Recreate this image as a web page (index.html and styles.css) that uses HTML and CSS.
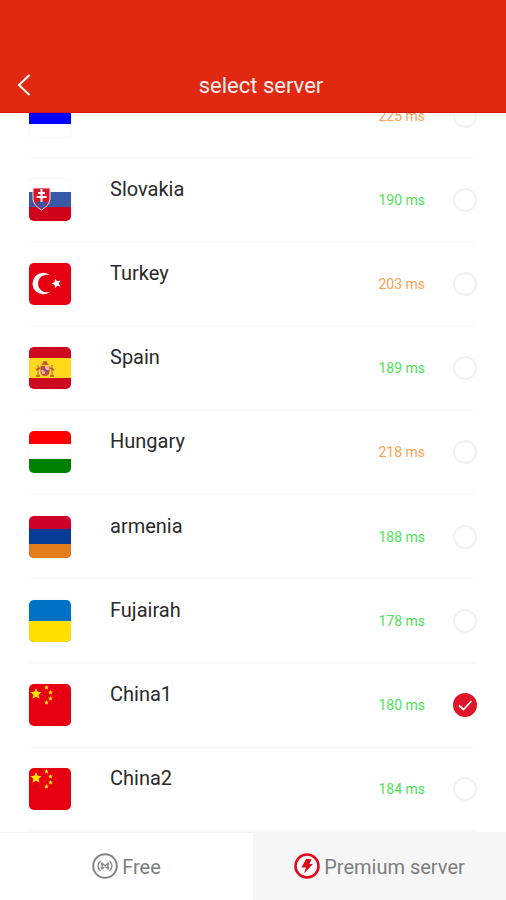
FILE: index.html
```html
<!DOCTYPE html>
<html lang="en">
<head>
<meta charset="utf-8">
<meta name="viewport" content="width=device-width, initial-scale=1">
<title>select server</title>
<link rel="stylesheet" href="styles.css">
</head>
<body>
<svg class="defs" aria-hidden="true">
  <symbol id="tick" viewBox="0 0 24 24"><path d="M6 12.500 L10.500 16.500 L18.500 8" fill="none" stroke="#fff" stroke-width="1.800"/></symbol>
  <symbol id="star" viewBox="-10 -10 20 20"><path d="M0-10 2.800-3.600 9.500-3.100 4.400 1.400 5.900 8.100 0 4.600 -5.900 8.100 -4.400 1.400 -9.500-3.100 -2.800-3.600Z"/></symbol>
  <symbol id="china" viewBox="0 0 42 42">
    <rect width="42" height="42" fill="#e60012"/>
    <g fill="#ffe600">
      <use href="#star" x="1" y="4" width="12" height="12"/>
      <use href="#star" x="15" y="1" width="5" height="5"/>
      <use href="#star" x="19" y="6" width="5" height="5"/>
      <use href="#star" x="19" y="12" width="5" height="5"/>
      <use href="#star" x="15" y="16" width="5" height="5"/>
    </g>
  </symbol>
</svg>
<header class="bar">
  <button class="back" type="button" aria-label="Back">
    <svg viewBox="0 0 14 24"><path d="M12.500 2 L2 12 L12.500 22" fill="none" stroke="#fff" stroke-width="2"/></svg>
  </button>
  <h1 class="title">select server</h1>
</header>
<main class="list">
  <div class="clip">
    <label class="row">
      <svg class="flag" viewBox="0 0 42 42"><rect width="42" height="42" fill="#fff"/><rect width="42" height="14" fill="#f00"/><rect y="14" width="42" height="15" fill="#00f"/></svg>
      <span class="name"></span><span class="ping slow">225 ms</span>
      <span class="pick"><input type="radio" name="server" aria-label="225 ms"></span>
    </label>
  </div>
  <label class="row">
    <svg class="flag" viewBox="0 0 42 42"><rect width="42" height="42" fill="#fff"/><rect y="13" width="42" height="15" fill="#3a58a8"/><rect y="28" width="42" height="14" fill="#d0021b"/><path d="M4 9H21V20Q20 27 12.500 31Q5 27 4 20Z" fill="#d91528" stroke="#f4dfe6" stroke-width="1"/><path d="M7 25Q9 21 12.500 23Q16 21 18 25Q16 28 12.500 30Q9 28 7 25Z" fill="#3a58a8"/><path d="M12.500 10V23M9 14H16M7.500 18H17.500" fill="none" stroke="#fff" stroke-width="2"/></svg>
    <span class="name">Slovakia</span><span class="ping">190 ms</span>
    <span class="pick"><input type="radio" name="server"></span>
  </label>
  <label class="row">
    <svg class="flag" viewBox="0 0 42 42"><rect width="42" height="42" fill="#e60012"/><path d="M21.500 12.500A10.800 10.800 0 1 0 21.500 28.500A8.800 8.800 0 1 1 21.500 12.500Z" fill="#fff"/><g fill="#fff" transform="rotate(-90 27.500 20.500)"><use href="#star" x="22.500" y="15.500" width="10" height="10"/></g></svg>
    <span class="name">Turkey</span><span class="ping slow">203 ms</span>
    <span class="pick"><input type="radio" name="server"></span>
  </label>
  <label class="row">
    <svg class="flag" viewBox="0 0 42 42"><rect width="42" height="42" fill="#cf0a20"/><rect y="11" width="42" height="20" fill="#ffd91a"/><path d="M12 18Q16 12 20 18Z" fill="#bd6040"/><path d="M11.500 19H20.500V25Q20 29 16 29Q12 29 11.500 25Z" fill="#c9463d"/><path d="M16 19H20V23H16ZM12 23H16V27H13Z" fill="#e9b4a6"/><circle cx="16" cy="23" r="1.500" fill="#6d5ba8"/><path d="M9 18V29M23 18V29" stroke="#b58a75" stroke-width="1.500"/><path d="M7 23 11 21M7 29H11M21 21 25 23M21 29H25M14 15H18" stroke="#b65335" stroke-width="1.500"/></svg>
    <span class="name">Spain</span><span class="ping">189 ms</span>
    <span class="pick"><input type="radio" name="server"></span>
  </label>
  <label class="row">
    <svg class="flag" viewBox="0 0 42 42"><rect width="42" height="42" fill="#fff"/><rect width="42" height="13" fill="#f00"/><rect y="28" width="42" height="14" fill="#008000"/></svg>
    <span class="name">Hungary</span><span class="ping slow">218 ms</span>
    <span class="pick"><input type="radio" name="server"></span>
  </label>
  <label class="row">
    <svg class="flag" viewBox="0 0 42 42"><rect width="42" height="42" fill="#cf0029"/><rect y="13" width="42" height="15" fill="#073b94"/><rect y="28" width="42" height="14" fill="#e27c1d"/></svg>
    <span class="name">armenia</span><span class="ping">188 ms</span>
    <span class="pick"><input type="radio" name="server"></span>
  </label>
  <label class="row">
    <svg class="flag" viewBox="0 0 42 42"><rect width="42" height="42" fill="#0072c6"/><rect y="21" width="42" height="21" fill="#ffdf00"/></svg>
    <span class="name">Fujairah</span><span class="ping">178 ms</span>
    <span class="pick"><input type="radio" name="server"></span>
  </label>
  <label class="row">
    <svg class="flag"><use href="#china"/></svg>
    <span class="name">China1</span><span class="ping">180 ms</span>
    <span class="pick"><input type="radio" name="server" checked><svg class="tick"><use href="#tick"/></svg></span>
  </label>
  <label class="row">
    <svg class="flag"><use href="#china"/></svg>
    <span class="name">China2</span><span class="ping">184 ms</span>
    <span class="pick"><input type="radio" name="server"></span>
  </label>
</main>
<nav class="tabs">
  <button class="tab" type="button">
    <svg class="tab-icon" viewBox="0 0 26 26" fill="none" stroke="#858585"><circle cx="13" cy="13" r="11.800" stroke-width="2"/><path d="M8.500 8Q3.500 13 8.500 18M17.500 8Q22.500 13 17.500 18M9 10.500Q11.500 13 9 15.500M17 10.500Q14.500 13 17 15.500M9.500 9.500 16.500 16.500M16.500 9.500 9.500 16.500" stroke-width="1.300"/></svg>
    <span>Free</span>
  </button>
  <button class="tab active" type="button">
    <svg class="tab-icon" viewBox="0 0 26 26"><circle cx="13" cy="13" r="11.500" fill="#fff" stroke="#e0081c" stroke-width="2.600"/><path d="M12 6H17.500L15.500 11H19L10 20.500L12 14.500H7.500Z" fill="#e0081c"/></svg>
    <span>Premium server</span>
  </button>
</nav>
</body>
</html>
```
FILE: styles.css
```css
* {
  box-sizing: border-box;
}

body {
  margin: 0;
  min-height: 100vh;
  display: flex;
  flex-direction: column;
  background: #fff;
  color: #2a2a2a;
  font-family: Roboto, "Liberation Sans", sans-serif;
}

.defs {
  display: none;
}

.bar {
  display: grid;
  grid-template-columns: 48px 1fr 32px;
  align-items: center;
  padding: 58px 0 0;
  background: #e12912;
  border-bottom: 1px solid #d5140a;
}

.back {
  display: flex;
  height: 54px;
  padding: 0 0 0 17px;
  align-items: center;
  border: 0;
  background: none;
}

.back svg {
  width: 14px;
  height: 24px;
}

.title {
  margin: 0;
  padding-top: 2px;
  color: #fff;
  font-size: 22px;
  font-weight: 400;
  line-height: 26px;
  text-align: center;
  opacity: 0.92;
}

.list {
  flex: 1;
  display: grid;
  grid-template-rows: 45px repeat(8, 1fr);
}

.clip {
  display: flex;
  align-items: flex-end;
  overflow: hidden;
}

.clip .row {
  flex: 1;
}

.row {
  display: flex;
  align-items: center;
  min-height: 84px;
  margin: 0 29px;
  border-bottom: 1px solid #f9f9f9;
}

.flag {
  width: 42px;
  height: 42px;
  border-radius: 5px;
  box-shadow: 0 0 1px #ccc;
}

.name {
  flex: 1;
  padding: 0 0 22px 39px;
  font-size: 20px;
  line-height: 24px;
}

.ping {
  color: #4be54f;
  font-size: 14px;
  line-height: 20px;
}

.slow {
  color: #ffa04d;
}

.pick {
  display: grid;
  margin-left: 28px;
}

.pick input {
  grid-area: 1 / 1;
  appearance: none;
  width: 24px;
  height: 24px;
  margin: 0;
  border: 2px solid #f2f2f2;
  border-radius: 50%;
}

.pick input:checked {
  border-color: #e0142a;
  background: #e0142a;
}

.tick {
  grid-area: 1 / 1;
  width: 24px;
  height: 24px;
  pointer-events: none;
}

.tabs {
  display: grid;
  grid-template-columns: 1fr 1fr;
  height: 68px;
  border-top: 1px solid #f4f4f4;
}

.tab {
  display: flex;
  align-items: center;
  justify-content: center;
  gap: 4px;
  padding: 0 0 2px;
  border: 0;
  background: #fff;
  color: #7d7d7d;
  font-family: inherit;
  font-size: 20px;
  line-height: 24px;
}

.tab span {
  padding-top: 3px;
}

.active {
  background: #f6f6f6;
}

.tab-icon {
  width: 26px;
  height: 26px;
}
```
